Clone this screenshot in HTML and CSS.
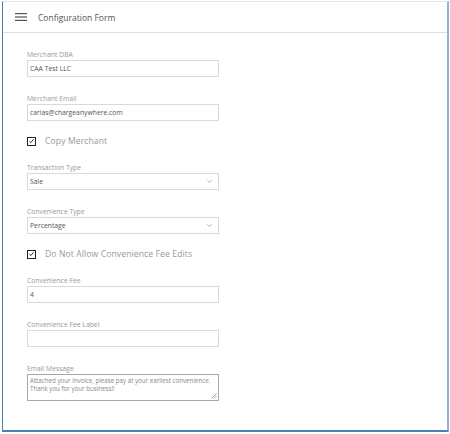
FILE: index.html
```html
<!DOCTYPE html>
<html>
<head>
<meta charset="utf-8">
<link rel="stylesheet" href="styles.css">
</head>
<body>
<div class="frame">
  <header class="header">
    <svg class="menu" width="12" height="8" viewBox="0 0 12 8"><rect x="0" y="0" width="12" height="1.2" fill="#555"/><rect x="0" y="3.4" width="12" height="1.2" fill="#555"/><rect x="0" y="6.8" width="12" height="1.2" fill="#555"/></svg>
    <span class="title">Configuration Form</span>
  </header>
  <form class="form">
    <div class="field">
      <label class="label">Merchant DBA</label>
      <div class="input">CAA Test LLC</div>
    </div>
    <div class="field">
      <label class="label">Merchant Email</label>
      <div class="input">carias@chargeanywhere.com</div>
    </div>
    <div class="check">
      <span class="box"><svg width="8" height="8" viewBox="0 0 8 8"><path d="M1.6 4.2 L3.2 5.8 L6.4 2" fill="none" stroke="#222" stroke-width="1.1"/></svg></span>
      <span class="check-text">Copy Merchant</span>
    </div>
    <div class="field">
      <label class="label">Transaction Type</label>
      <div class="input select">Sale<svg class="arrow" width="5" height="3" viewBox="0 0 5 3"><path d="M0.4 0.4 L2.5 2.5 L4.6 0.4" fill="none" stroke="#999" stroke-width="0.8"/></svg></div>
    </div>
    <div class="field">
      <label class="label">Convenience Type</label>
      <div class="input select">Percentage<svg class="arrow" width="5" height="3" viewBox="0 0 5 3"><path d="M0.4 0.4 L2.5 2.5 L4.6 0.4" fill="none" stroke="#999" stroke-width="0.8"/></svg></div>
    </div>
    <div class="check">
      <span class="box"><svg width="8" height="8" viewBox="0 0 8 8"><path d="M1.6 4.2 L3.2 5.8 L6.4 2" fill="none" stroke="#222" stroke-width="1.1"/></svg></span>
      <span class="check-text">Do Not Allow Convenience Fee Edits</span>
    </div>
    <div class="field">
      <label class="label">Convenience Fee</label>
      <div class="input">4</div>
    </div>
    <div class="field">
      <label class="label">Convenience Fee Label</label>
      <div class="input"></div>
    </div>
    <div class="field">
      <label class="label">Email Message</label>
      <div class="textarea">Attached your invoice, please pay at your earliest convenience.<br>Thank you for your business!!<svg class="grip" width="6" height="6" viewBox="0 0 6 6"><path d="M5.5 0.5 L0.5 5.5 M5.5 3 L3 5.5" stroke="#777" stroke-width="0.7"/></svg></div>
    </div>
  </form>
</div>
</body>
</html>
```
FILE: styles.css
```css
html, body {
  margin: 0;
  padding: 0;
  background: #ffffff;
}
body {
  font-family: "Open Sans", "Liberation Sans", sans-serif;
  width: 450px;
  height: 434px;
  overflow: hidden;
}
.frame {
  box-sizing: border-box;
  margin: 1px 0 0 2px;
  width: 447px;
  height: 431px;
  border-top: 1px solid #e6e6e6;
  border-left: 1px solid #4a7fb8;
  border-right: 2px solid #8fb2dc;
  border-bottom: 2px solid #4a7fb8;
  background: #fff;
}
.header {
  height: 31px;
  box-sizing: border-box;
  border-bottom: 1px solid #dedede;
  display: flex;
  align-items: center;
  padding-left: 12px;
}
.menu {
  display: block;
  margin-right: 11px;
}
.title {
  font-size: 8.5px;
  color: #555;
}
.form {
  display: flex;
  flex-direction: column;
  padding: 17px 0 0 24px;
}
.field {
  display: flex;
  flex-direction: column;
  width: 192px;
  margin-bottom: 17px;
}
.label {
  font-size: 6.8px;
  line-height: 10px;
  color: #9a9a9a;
}
.input {
  box-sizing: border-box;
  height: 17px;
  border: 1px solid #d9d9d9;
  font-size: 6.8px;
  line-height: 15px;
  padding-left: 2px;
  color: #555;
  position: relative;
}
.select .arrow {
  position: absolute;
  right: 6px;
  top: 6px;
}
.textarea {
  box-sizing: border-box;
  height: 27px;
  border: 1px solid #a8a8a8;
  font-size: 6.2px;
  line-height: 8px;
  padding: 2px 2px;
  color: #888;
  white-space: nowrap;
  overflow: hidden;
  position: relative;
}
.grip {
  position: absolute;
  right: 1px;
  bottom: 1px;
}
.check {
  display: flex;
  align-items: center;
  height: 12px;
  margin-top: -3px;
  margin-bottom: 16px;
}
.box {
  box-sizing: border-box;
  width: 9px;
  height: 9px;
  border: 1px solid #222;
  display: flex;
  align-items: center;
  justify-content: center;
  margin-right: 9px;
}
.box svg {
  display: block;
}
.check-text {
  font-size: 8.6px;
  color: #999;
  letter-spacing: 0.1px;
}
```
